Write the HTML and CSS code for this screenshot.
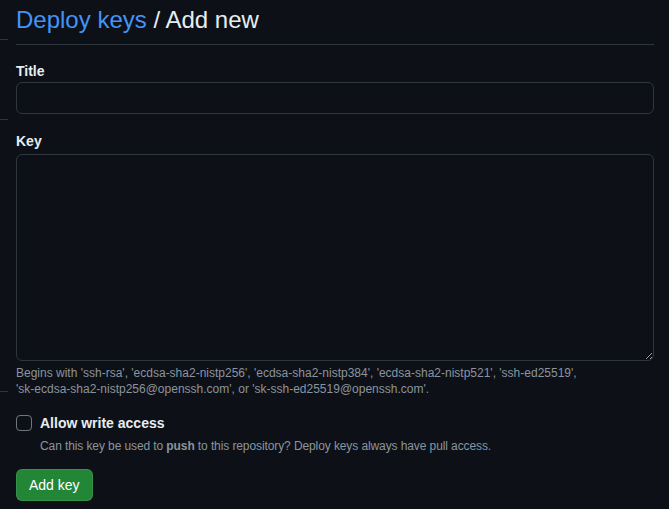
FILE: index.html
```html
<!DOCTYPE html>
<html lang="en">
<head>
<meta charset="utf-8">
<title>Add new deploy key</title>
<link rel="stylesheet" href="styles.css">
</head>
<body>
<div class="layout">
  <aside class="sidenav">
    <span class="tick t1"></span>
    <span class="tick t2"></span>
    <span class="tick t3"></span>
  </aside>
  <main class="main">
    <div class="subhead">
      <h2 class="subhead-heading"><a href="#" class="crumb">Deploy keys</a> / Add new</h2>
    </div>
    <form class="form">
      <div class="form-group">
        <label class="label" for="title">Title</label>
        <input class="input" id="title" type="text">
      </div>
      <div class="form-group key-group">
        <label class="label" for="key">Key</label>
        <textarea class="input textarea" id="key"></textarea>
        <p class="note">Begins with <span class="tok">'ssh-rsa',</span> <span class="tok">'ecdsa-sha2-nistp256',</span> <span class="tok">'ecdsa-sha2-nistp384',</span> <span class="tok">'ecdsa-sha2-nistp521',</span> <span class="tok">'ssh-ed25519',</span> <span class="tok">'sk-ecdsa-sha2-nistp256@openssh.com',</span> or <span class="tok">'sk-ssh-ed25519@openssh.com'.</span></p>
      </div>
      <div class="checkbox-group">
        <label class="check-label"><input type="checkbox" class="checkbox"><span>Allow write access</span></label>
        <p class="check-note">Can this key be used to <strong>push</strong> to this repository? Deploy keys always have pull access.</p>
      </div>
      <button type="button" class="btn">Add key</button>
    </form>
  </main>
</div>
</body>
</html>
```

FILE: styles.css
```css
* { box-sizing: border-box; }
html, body {
  margin: 0;
  padding: 0;
  background: #0d1117;
  color: #e6edf3;
  font-family: "Liberation Sans", Arial, sans-serif;
  font-size: 14px;
}
.layout {
  display: flex;
  min-height: 509px;
}
.sidenav {
  position: relative;
  width: 16px;
  flex: none;
}
.tick {
  position: absolute;
  left: 0;
  width: 8px;
  height: 1px;
  background: #30363d;
}
.t1 { top: 39px; }
.t2 { top: 119px; }
.t3 { top: 391px; }
.main {
  width: 638px;
}
.subhead {
  border-bottom: 1px solid #30363d;
  padding: 4px 0 8px;
  margin-bottom: 16px;
}
.subhead-heading {
  margin: 0;
  font-size: 24px;
  font-weight: 400;
  line-height: 32px;
  color: #e6edf3;
}
.crumb {
  color: #4493f8;
  text-decoration: none;
}
.form-group {
  margin-bottom: 17px;
}
.label {
  display: block;
  font-weight: 700;
  font-size: 14px;
  line-height: 20px;
  margin-bottom: 1px;
}
.key-group .label {
  margin-bottom: 3px;
}
.input {
  display: block;
  width: 100%;
  height: 32px;
  background: #0d1117;
  border: 1px solid #30363d;
  border-radius: 6px;
  color: #e6edf3;
  font: inherit;
  padding: 5px 12px;
}
.textarea {
  height: 207px;
  resize: vertical;
}
.key-group {
  margin-bottom: 0;
}
.note {
  margin: 4px 0 0;
  font-size: 12px;
  line-height: 16px;
  color: #8b949e;
}
.tok {
  white-space: nowrap;
}
.checkbox-group {
  margin-top: 16px;
  margin-bottom: 15px;
}
.check-label {
  display: flex;
  align-items: center;
  gap: 8px;
  font-weight: 700;
  line-height: 20px;
}
.checkbox {
  appearance: none;
  -webkit-appearance: none;
  margin: 0;
  width: 16px;
  height: 16px;
  border: 1px solid #6e7681;
  border-radius: 4px;
  background: #0d1117;
}
.check-note {
  margin: 5px 0 0 24px;
  font-size: 12px;
  line-height: 16px;
  color: #8b949e;
  letter-spacing: -0.1px;
}
.check-note strong { font-weight: 700; }
.btn {
  display: block;
  height: 32px;
  padding: 0 12px;
  background: #238636;
  color: #ffffff;
  border: 1px solid rgba(240,246,252,0.1);
  border-radius: 6px;
  font: inherit;
  font-size: 14px;
  font-weight: 400;
}
```
